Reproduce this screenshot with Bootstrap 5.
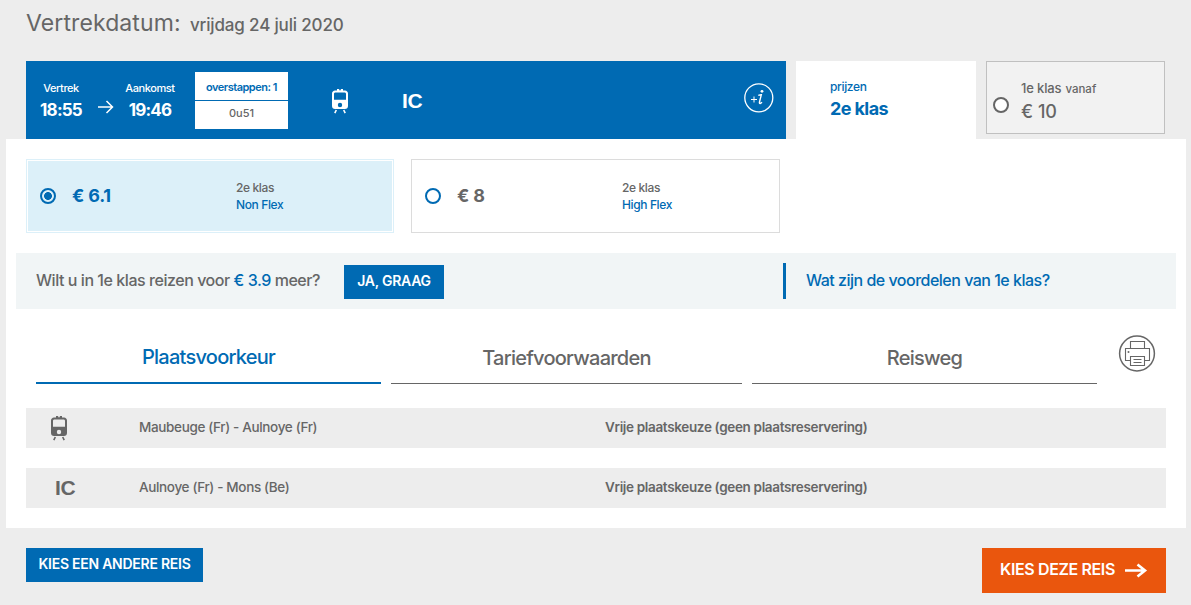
<!DOCTYPE html>
<html lang="nl">
<head>
<meta charset="utf-8">
<meta name="viewport" content="width=device-width, initial-scale=1">
<title>Vertrekdatum</title>
<link href="https://cdn.jsdelivr.net/npm/bootstrap@5.3.0/dist/css/bootstrap.min.css" rel="stylesheet">
<style>
:root{--rail-blue:#006ab3;--rail-grey:#666}
body{background:#ededed;color:var(--rail-grey);font-family:Inter,"Liberation Sans",sans-serif;font-size:13px;font-weight:500;line-height:17px;min-width:1191px;overflow:hidden}
span,h1,h2,a,button{white-space:nowrap}
.blue{color:var(--rail-blue)}
.page-head{height:61px;padding:8px 0 0 26px}
.page-head h1{font-size:23px;line-height:31px;font-weight:400;letter-spacing:.1px;width:164px}
.page-head span{font-size:17px;line-height:34px;letter-spacing:-.16px}
.trip{margin:0 26px;height:78px;gap:10px}
.trip-bar{width:760px;background:var(--rail-blue);color:#fff}
.stop{font-size:11px;line-height:16px;padding-top:19px;letter-spacing:-.4px}
.stop strong{display:block;font-size:17px;line-height:22px;font-weight:700;margin-top:3px;letter-spacing:-.8px}
.dep{width:44px;margin-left:13px}
.arr{width:52px;margin-left:10px;margin-right:1px}
.go{margin:38px 0 0 14px}
.changes{width:93px;height:57px;margin:11px 0 0 18px;background:#fff;font-size:11px}
.changes div:first-child{height:29px;line-height:31px;border-bottom:1px solid var(--rail-blue);color:var(--rail-blue);font-weight:600;letter-spacing:-.5px}
.changes div:last-child{height:28px;line-height:25px;color:var(--rail-grey)}
.ic{font-family:"Liberation Sans",sans-serif;font-weight:700;font-size:21px;line-height:24px;letter-spacing:-.3px}
.class2{width:180px;background:#fff;padding:17px 0 0 34px;font-size:12px;letter-spacing:-.35px}
.class2 strong{display:block;font-size:18px;line-height:27px;font-weight:700;letter-spacing:-.6px}
.class1{width:179px;height:73px;background:#f2f2f2;border:1px solid #c0c0c0}
.ring{width:16px;height:16px;border:2px solid var(--rail-grey);border-radius:50%;background:#fff;flex:none}
.ring-blue{border-color:var(--rail-blue)}
.ring-on{background:radial-gradient(circle,var(--rail-blue) 0 3.600px,#fff0 4.200px)}
.panel{margin:0 5px 0 6px;height:389px;background:#fff;padding:20px}
.options{gap:17px;height:74px}
.fare{width:369px;border:1px solid #dcdcdc;padding-left:13px}
.fare.on{width:368px;border-color:#dcf0f9;background:#dcf0f9;box-shadow:inset 0 0 0 1px #fff}
.fare .price{font-size:18px;font-weight:700;margin-left:16px;width:165px;line-height:24px;letter-spacing:-.2px}
.fare.on .price{width:164px;margin-left:16px}
.fare small{font-size:12px;line-height:17px;font-weight:500;letter-spacing:-.38px}
.upsell{margin:20px -10px 0;height:56px;background:#f1f5f6;padding:10px 20px;font-size:16px;letter-spacing:-.45px}
.flat-btn{--bs-btn-border-radius:0;--bs-btn-border-width:0;--bs-btn-bg:var(--rail-blue);--bs-btn-color:#fff;--bs-btn-hover-bg:#00558f;--bs-btn-hover-color:#fff;--bs-btn-padding-x:0;--bs-btn-padding-y:0;--bs-btn-font-weight:600;--bs-btn-font-size:14px;height:34px;padding-bottom:3px;letter-spacing:-.25px}
.benefits{border-left:3px solid var(--rail-blue);height:36px;padding-left:20px;line-height:34px;letter-spacing:-.5px}
.tabs{margin:20px 0 0 10px;gap:10px;height:55px}
.tabs a{border-bottom:1px solid var(--rail-grey);color:var(--rail-grey);text-align:center;font-size:20px;line-height:59px;text-decoration:none;height:55px;letter-spacing:-.75px}
.tabs a.on{border-bottom:2px solid var(--rail-blue);color:var(--rail-blue);line-height:57px}
.leg{height:40px;background:#ededed;font-size:13.500px;letter-spacing:-.34px}
.leg-kind{width:113px}
.leg-route{width:466px}
.leg-route,.seat{padding-bottom:1px}
.foot{padding:20px 25px 0 26px}
.orange{--bs-btn-bg:#ea560d;--bs-btn-hover-bg:#c94808;--bs-btn-font-size:16px;width:184px;height:45px;padding-bottom:0;letter-spacing:-.38px}
.orange span{padding-bottom:3px}
</style>
</head>
<body>
<svg width="0" height="0" class="d-none">
  <symbol id="train" viewBox="0 0 18 26">
    <path fill="currentColor" fill-rule="evenodd" d="M6 1h2.200v1.300h1.600V1H12v1.500h2c1.700.2 3 1.300 3 3V18c0 1.800-1.200 3-3 3H4c-1.800 0-3-1.200-3-3V5.500C1 3.800 2.300 2.700 4 2.500h2zM4.500 4.500C3.600 4.500 3 5 3 6v5.800h12V6C15 5 14.400 4.500 13.500 4.500zM9 14.800a2.200 2.200 0 1 0 0 4.400 2.200 2.200 0 0 0 0-4.400z"/>
    <path d="M5.300 22 3.800 25.200M12.700 22l1.500 3.200" stroke="currentColor" stroke-width="1.600"/>
  </symbol>
</svg>

<header class="page-head d-flex">
  <h1 class="m-0">Vertrekdatum:</h1><span>vrijdag 24 juli 2020</span>
</header>

<section class="trip d-flex">
  <div class="trip-bar d-flex">
    <div class="stop dep text-center"><span>Vertrek</span><strong>18:55</strong></div>
    <svg class="go" width="17" height="16" fill="none" stroke="#fff" stroke-width="1.500"><path d="M1 8h14M9.500 2l6 6-6 6"/></svg>
    <div class="stop arr text-center"><span>Aankomst</span><strong>19:46</strong></div>
    <div class="changes text-center"><div><span>overstappen: 1</span></div><div><span>0u51</span></div></div>
    <svg width="18" height="26" style="margin:27px 0 0 43px"><use href="#train"/></svg>
    <span class="ic" style="margin:28px 0 0 53px">IC</span>
    <svg class="ms-auto" style="margin:21px 12px 0 0" width="31" height="31" fill="none" stroke="#fff">
      <circle cx="15.800" cy="15.800" r="14" stroke-width="1.300"/>
      <path d="M8 17.500h6M11 14.500v6" stroke-width="1"/>
      <path d="M15.300 13.300c1-.3 2-.5 3-.5l-1.800 7.200c-.3 1.200.1 1.700 1 1.300.600-.2 1-.6 1.500-1.100" stroke-width="1.400"/>
      <circle cx="19" cy="9.300" r="1.400" fill="#fff" stroke="none"/>
    </svg>
  </div>
  <div class="class2 blue"><span>prijzen</span><strong>2e klas</strong></div>
  <label class="class1 d-flex">
    <span class="ring" style="margin:35px 12px 0 6px"></span>
    <div style="padding-top:18px"><span style="font-size:13px;letter-spacing:-.15px">1e klas</span><span style="font-size:11.500px;margin-left:4px">vanaf</span><div style="font-size:18px;line-height:28px"><span>€ 10</span></div></div>
  </label>
</section>

<main class="panel">
  <div class="options d-flex">
    <label class="fare on d-flex align-items-center"><span class="ring ring-blue ring-on"></span><span class="price blue">€ 6.1</span><small>2e klas<br><span class="blue">Non Flex</span></small></label>
    <label class="fare d-flex align-items-center"><span class="ring ring-blue"></span><span class="price">€ 8</span><small>2e klas<br><span class="blue">High Flex</span></small></label>
  </div>

  <div class="upsell d-flex align-items-start">
    <div style="width:308px;line-height:35px"><span>Wilt u in 1e klas reizen voor <span class="blue">€ 3.9</span> meer?</span></div>
    <button class="btn flat-btn" style="width:100px;margin-top:2px">JA, GRAAG</button>
    <a href="#" class="benefits blue text-decoration-none" style="margin-left:339px">Wat zijn de voordelen van 1e klas?</a>
  </div>

  <nav class="tabs d-flex">
    <a href="#" class="on" style="width:345px">Plaatsvoorkeur</a>
    <a href="#" style="width:351px">Tariefvoorwaarden</a>
    <a href="#" style="width:345px">Reisweg</a>
    <svg style="margin:6px 0 0 11px" width="38" height="38" fill="none" stroke="#666" stroke-width="1.100">
      <circle cx="19" cy="18.500" r="17.400" stroke-width="1.500"/>
      <path d="M12.500 13.500v-7h14v7M12.500 25.500h-5v-12h24v12h-5M12.500 21.500h14v9h-14zM15.500 24.500h8M15.500 27.500h8"/>
      <circle cx="10.500" cy="17" r="1" fill="#666" stroke="none"/>
    </svg>
  </nav>

  <div class="leg d-flex align-items-center" style="margin-top:24px">
    <div class="leg-kind"><svg width="18" height="26" style="margin-left:24px"><use href="#train"/></svg></div>
    <div class="leg-route"><span>Maubeuge (Fr) - Aulnoye (Fr)</span></div>
    <span class="seat fw-semibold">Vrije plaatskeuze (geen plaatsreservering)</span>
  </div>
  <div class="leg d-flex align-items-center" style="margin-top:20px">
    <div class="leg-kind"><span class="ic" style="margin-left:29px">IC</span></div>
    <div class="leg-route"><span>Aulnoye (Fr) - Mons (Be)</span></div>
    <span class="seat fw-semibold">Vrije plaatskeuze (geen plaatsreservering)</span>
  </div>
</main>

<footer class="foot d-flex justify-content-between align-items-start">
  <button class="btn flat-btn" style="width:177px">KIES EEN ANDERE REIS</button>
  <button class="btn flat-btn orange d-flex align-items-center justify-content-center"><span>KIES DEZE REIS</span>
    <svg style="margin-left:9px" width="24" height="16" fill="none" stroke="#fff" stroke-width="2.600"><path d="M1 7.500h20M13.500 1.500l7.500 6-7.500 6"/></svg>
  </button>
</footer>
<script src="https://cdn.jsdelivr.net/npm/bootstrap@5.3.0/dist/js/bootstrap.bundle.min.js"></script>
</body>
</html>
